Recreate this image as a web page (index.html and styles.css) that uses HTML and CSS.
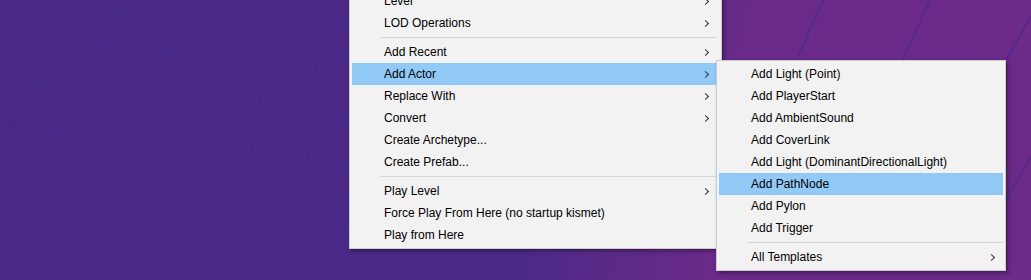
FILE: index.html
```html
<!DOCTYPE html>
<html lang="en">
<head>
    <meta charset="UTF-8">
    <meta name="viewport" content="width=device-width, initial-scale=1.0">
    <title>Viewport Context Menu</title>
    <link rel="stylesheet" href="styles.css">
</head>
<body>
    <div class="viewport">
        <svg class="grid" width="1031" height="280" viewBox="0 0 1031 280">
            <g stroke="#40298c" stroke-width="2" fill="none" opacity="0.45">
                <line x1="20" y1="6" x2="350" y2="28"/>
                <line x1="0" y1="40" x2="350" y2="62"/>
                <line x1="0" y1="78" x2="350" y2="128"/>
                <line x1="0" y1="122" x2="350" y2="170"/>
                <line x1="0" y1="190" x2="350" y2="237"/>
                <line x1="25" y1="0" x2="0" y2="42"/>
                <line x1="78" y1="0" x2="5" y2="140"/>
                <line x1="130" y1="0" x2="62" y2="155"/>
                <line x1="180" y1="0" x2="124" y2="160"/>
                <line x1="227" y1="0" x2="185" y2="170"/>
                <line x1="277" y1="0" x2="247" y2="176"/>
                <line x1="322" y1="0" x2="306" y2="184"/>
                <line x1="82" y1="155" x2="28" y2="280"/>
                <line x1="173" y1="166" x2="142" y2="280"/>
                <line x1="258" y1="178" x2="246" y2="280"/>
                <line x1="347" y1="187" x2="343" y2="280"/>
                <line x1="823" y1="0" x2="790" y2="75"/>
                <line x1="930" y1="0" x2="898" y2="70"/>
                <line x1="1040" y1="0" x2="1006" y2="60"/>
                <line x1="1040" y1="140" x2="1006" y2="200"/>
            </g>
        </svg>

        <div class="menu main-menu">
            <div class="item"><span>Level</span><span class="arrow"></span></div>
            <div class="item"><span>LOD Operations</span><span class="arrow"></span></div>
            <div class="sep"></div>
            <div class="item"><span>Add Recent</span><span class="arrow"></span></div>
            <div class="item active"><span>Add Actor</span><span class="arrow"></span></div>
            <div class="item"><span>Replace With</span><span class="arrow"></span></div>
            <div class="item"><span>Convert</span><span class="arrow"></span></div>
            <div class="item"><span>Create Archetype...</span></div>
            <div class="item"><span>Create Prefab...</span></div>
            <div class="sep"></div>
            <div class="item"><span>Play Level</span><span class="arrow"></span></div>
            <div class="item"><span>Force Play From Here (no startup kismet)</span></div>
            <div class="item"><span>Play from Here</span></div>
        </div>

        <div class="menu sub-menu">
            <div class="item"><span>Add Light (Point)</span></div>
            <div class="item"><span>Add PlayerStart</span></div>
            <div class="item"><span>Add AmbientSound</span></div>
            <div class="item"><span>Add CoverLink</span></div>
            <div class="item"><span>Add Light (DominantDirectionalLight)</span></div>
            <div class="item active"><span>Add PathNode</span></div>
            <div class="item"><span>Add Pylon</span></div>
            <div class="item"><span>Add Trigger</span></div>
            <div class="sep"></div>
            <div class="item"><span>All Templates</span><span class="arrow"></span></div>
        </div>
    </div>
</body>
</html>
```

FILE: styles.css
```css
body {
    margin: 0;
    overflow: hidden;
    font-family: "Liberation Sans", Arial, sans-serif;
}
.viewport {
    position: relative;
    width: 1031px;
    height: 280px;
    overflow: hidden;
    background: linear-gradient(100deg, #4b2a87 0%, #4c2a88 52%, #6a2a89 70%, #6c2a89 100%);
}
.grid {
    position: absolute;
    left: 0;
    top: 0;
}
.menu {
    position: absolute;
    box-sizing: border-box;
    background-color: #f2f2f2;
    border: 1px solid #cccccc;
    padding: 2px 4px 2px 2px;
    box-shadow: 2px 2px 4px rgba(0, 0, 0, 0.4);
}
.main-menu {
    left: 349px;
    top: -13px;
    width: 373px;
}
.sub-menu {
    left: 716px;
    top: 60px;
    width: 290px;
    padding-right: 2px;
}
.item {
    display: flex;
    align-items: center;
    justify-content: space-between;
    height: 22px;
    padding: 0 9px 0 32px;
    font-size: 12px;
    color: #000;
    white-space: nowrap;
}
.item.active {
    background-color: #91c9f7;
}
.arrow {
    width: 4px;
    height: 4px;
    border-right: 1px solid #333;
    border-bottom: 1px solid #333;
    transform: rotate(-45deg);
}
.sep {
    height: 1px;
    margin: 3px 0 3px 28px;
    background-color: #d7d7d7;
}
```
